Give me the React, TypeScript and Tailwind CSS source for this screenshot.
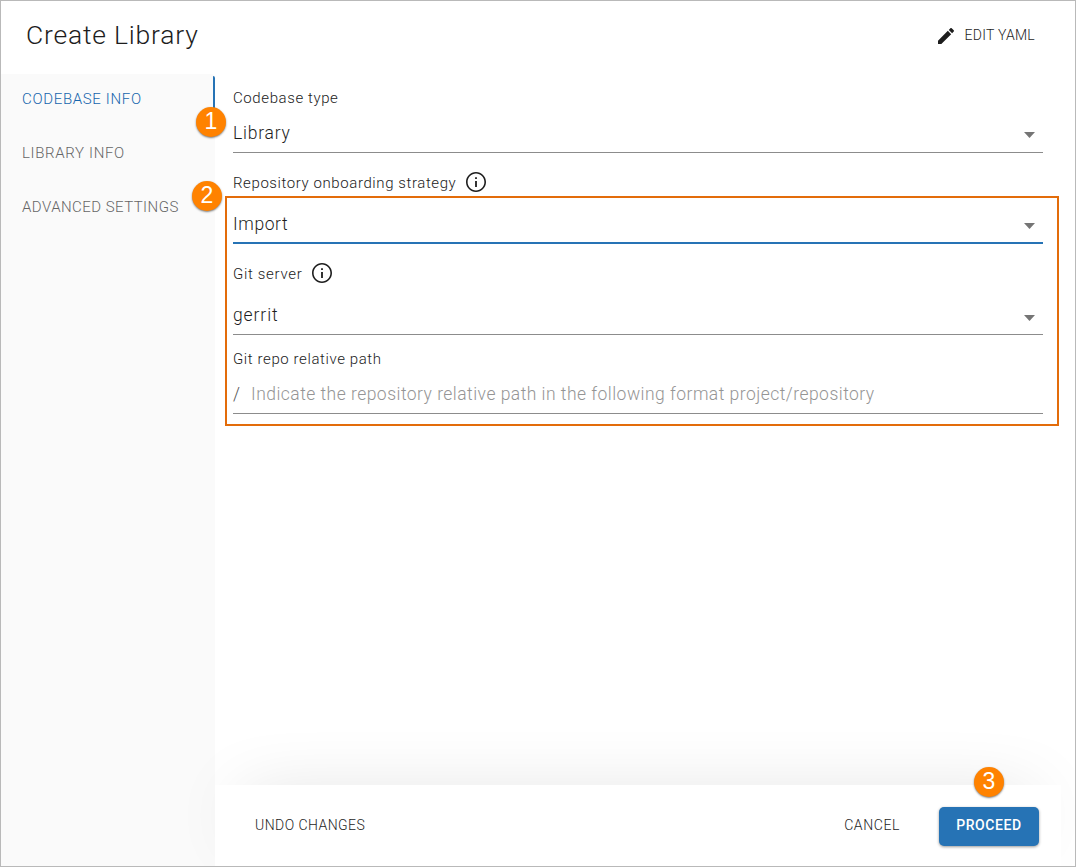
import type { ReactNode } from "react";

function InfoIcon() {
  return (
    <svg viewBox="2 2 20 20" className="mb-[2px] size-5 shrink-0 fill-[#1d1d1d]">
      <path d="M11.100 7.200h1.800v1.800h-1.800zm0 3.800h1.800v6h-1.800zM12 2C6.480 2 2 6.480 2 12s4.480 10 10 10 10-4.480 10-10S17.520 2 12 2zm0 18.400c-4.630 0-8.400-3.770-8.400-8.400s3.770-8.400 8.400-8.400 8.400 3.770 8.400 8.400-3.770 8.400-8.400 8.400z" />
    </svg>
  );
}

function PencilIcon() {
  return (
    <svg viewBox="3 3 18 18" className="size-4 shrink-0 fill-[#1d1d1d]">
      <path d="M3 17.250V21h3.750L17.810 9.940l-3.750-3.750L3 17.250zM20.710 7.040c.390-.390.390-1.020 0-1.410l-2.340-2.340c-.390-.390-1.020-.390-1.410 0l-1.830 1.830 3.750 3.750 1.830-1.830z" />
    </svg>
  );
}

function Arrow({ className }: { className: string }) {
  return (
    <svg viewBox="0 0 11 6" className={`mr-2 h-[6px] w-[11px] shrink-0 fill-[#757575] ${className}`}>
      <path d="M0 0h11L5.500 6z" />
    </svg>
  );
}

function Label({ children, info, className }: { children: ReactNode; info?: boolean; className: string }) {
  return (
    <div className={`flex h-5 items-center gap-[9.500px] text-[15px] leading-5 whitespace-nowrap text-[#222] ${className}`}>
      <span>{children}</span>
      {info && <InfoIcon />}
    </div>
  );
}

function Select({
  children,
  className,
  textClass,
  arrowClass,
}: {
  children: ReactNode;
  className: string;
  textClass: string;
  arrowClass: string;
}) {
  return (
    <div className={`flex items-center justify-between ${className}`}>
      <span className={`text-[17.500px] leading-6 text-[#1d1d1d] ${textClass}`}>{children}</span>
      <Arrow className={arrowClass} />
    </div>
  );
}

function Badge({ n, className }: { n: number; className: string }) {
  return (
    <div
      className={`absolute flex size-[30px] items-center justify-center rounded-full bg-[#ff8200] pb-[2px] font-['Liberation_Sans',sans-serif] text-[23px] leading-none font-normal text-white shadow-[0_1px_2px_rgba(0,0,0,0.5)] ${className}`}
    >
      {n}
    </div>
  );
}

export default function App() {
  return (
    <div className="relative flex h-[867px] w-[1076px] flex-col overflow-hidden border border-[#b9b9b9] bg-white font-['Roboto',sans-serif] font-light">
      <header className="flex h-[73px] shrink-0 items-center justify-between pr-10 pb-[3px] pl-[25px]">
        <h1 className="mb-[2px] text-[26.500px] leading-8 font-[350] tracking-[0.800px] text-[#1d1d1d]">Create Library</h1>
        <button className="flex items-center gap-[11px] text-[14px] leading-5 tracking-[0.250px] text-[#1d1d1d]">
          <PencilIcon />
          <span className="mb-[2px]">EDIT YAML</span>
        </button>
      </header>

      <div className="flex min-h-0 flex-1">
        <nav className="flex w-[214px] shrink-0 flex-col gap-1 rounded-tr bg-[#fafafa] pl-[21px] text-[15px] text-[#666]">
          <div className="relative flex h-[50px] items-center text-[#1565ad]">
            <span className="tracking-[0.660px]">CODEBASE INFO</span>
            <span className="absolute top-[2px] right-0 h-[46px] w-[2px] rounded-tr bg-[#2673b5]" />
          </div>
          <div className="flex h-[50px] items-center">
            <span className="tracking-[0.650px]">LIBRARY INFO</span>
          </div>
          <div className="flex h-[50px] items-center">
            <span className="tracking-[0.460px]">ADVANCED SETTINGS</span>
          </div>
        </nav>

        <div className="flex flex-1 flex-col">
          <main className="flex-1 pt-[14px] pr-8 pl-[18px]">
            <Label className="tracking-[0.600px]">Codebase type</Label>
            <Select
              className="mt-[13px] border-b border-[#8c8c8c] pb-[7px]"
              textClass="tracking-[0.780px]"
              arrowClass="mt-1"
            >
              Library
            </Select>
            <Label info className="mt-5 mb-[3px] tracking-[0.590px]">
              Repository onboarding strategy
            </Label>
            <section className="-mr-4 -ml-2 border-2 border-[#e36c0a] pt-[14px] pr-[14px] pb-[10px] pl-[6px]">
              <Select
                className="border-b-2 border-[#2673b5] pb-[6px]"
                textClass="tracking-[0.600px]"
                arrowClass="mt-1"
              >
                Import
              </Select>
              <Label info className="mt-5 tracking-[0.680px]">
                Git server
              </Label>
              <Select
                className="mt-[19px] border-b border-[#8c8c8c] pb-[7px]"
                textClass="tracking-[0.900px]"
                arrowClass="mt-[6px]"
              >
                gerrit
              </Select>
              <Label className="mt-[14px] tracking-[0.600px]">Git repo relative path</Label>
              <div className="mt-[13px] flex border-b border-[#8c8c8c] pb-[7px] text-[17.500px] leading-6 whitespace-nowrap">
                <span className="w-[18px] text-[#555]">/</span>
                <span className="tracking-[0.470px] text-[#959595]">
                  Indicate the repository relative path in the following format project/repository
                </span>
              </div>
            </section>
          </main>

          <footer className="mr-[14px] flex h-[81px] shrink-0 items-center bg-white pr-[22px] pl-10 text-[14px] leading-5 text-[#1d1d1d] shadow-[0_-10px_70px_-28px_rgba(0,0,0,0.230)]">
            <button className="mb-[2px] tracking-[0.450px]">UNDO CHANGES</button>
            <button className="mr-[39px] mb-[2px] ml-auto tracking-[0.600px]">CANCEL</button>
            <button className="mt-[2px] h-[39px] w-[100px] rounded-[5px] bg-[#2673b5] pb-[3px] font-medium tracking-[0.600px] text-white shadow-[0_1px_3px_rgba(0,0,0,0.400)]">
              PROCEED
            </button>
          </footer>
        </div>
      </div>

      <Badge n={1} className="top-[106px] left-[195px]" />
      <Badge n={2} className="top-[180px] left-[191px]" />
      <Badge n={3} className="top-[766px] left-[973px]" />
    </div>
  );
}
